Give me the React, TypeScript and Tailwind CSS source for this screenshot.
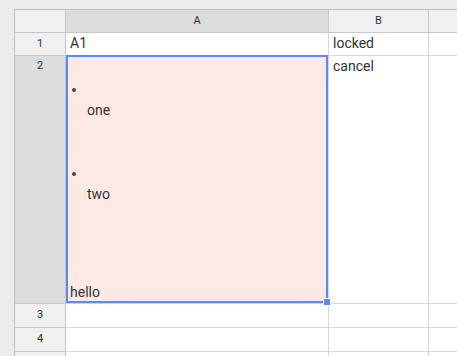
import React from "react";

// Header/row header cell styling
const hdr = "border-r border-b border-[#c6c6c6] text-center text-[11px] leading-[20px] text-[#333]";
const cell = "border-r border-b border-[#d6d6d6] bg-white px-[4px] text-[14px] leading-[21px] text-[#333]";

function Bullet() {
  return (
    <div className="h-[21px] flex items-center">
      <span className="ml-[2px] mt-[1px] block h-[4px] w-[4px] rounded-full bg-[#444]" />
    </div>
  );
}

export default function App() {
  return (
    <div
      className="h-[356px] w-[457px] overflow-hidden bg-[#ececec] pl-[14px] pt-[9px]"
      style={{ fontFamily: "Roboto, 'Liberation Sans', sans-serif" }}
    >
      <div className="grid grid-cols-[51px_263px_100px_120px] grid-rows-[23px_23px_248px_24px_24px_24px] border-l border-t border-[#c0c0c0] w-[540px]">
        {/* column headers */}
        <div className={`${hdr} bg-[#f0f0f0]`} />
        <div className={`${hdr} bg-[#dcdcdc] leading-[22px]`}>A</div>
        <div className={`${hdr} bg-[#f0f0f0] leading-[22px]`}>B</div>
        <div className={`${hdr} bg-[#f0f0f0]`} />

        {/* row 1 */}
        <div className={`${hdr} bg-[#f0f0f0] leading-[22px]`}>1</div>
        <div className={cell}>A1</div>
        <div className={cell}>locked</div>
        <div className={cell} />

        {/* row 2 */}
        <div className={`${hdr} bg-[#dcdcdc] leading-[18px]`}>2</div>
        <div className="relative border-r border-b border-[#d6d6d6] bg-[#fdeae6] px-[4px] text-[14px] leading-[21px] text-[#333] flex flex-col">
          <div className="mt-[23px]">
            <Bullet />
            <div className="pl-[17px]">one</div>
          </div>
          <div className="mt-[42px]">
            <Bullet />
            <div className="pl-[17px]">two</div>
          </div>
          <div className="mt-auto">hello</div>
          {/* selection border + fill handle */}
          <div className="absolute -top-px left-0 right-0 bottom-0 border-2 border-[#5a88f7]">
            <div className="absolute -right-[5px] -bottom-[5px] h-[8px] w-[8px] border border-white bg-[#5a88f7]" />
          </div>
        </div>
        <div className={cell}>cancel</div>
        <div className={cell} />

        {/* rows 3-4, row 5 only peeks in at the bottom */}
        {[3, 4, 0].map((n) => (
          <React.Fragment key={n}>
            <div className={`${hdr} bg-[#f0f0f0] leading-[21px]`}>{n > 0 ? n : null}</div>
            <div className={cell} />
            <div className={cell} />
            <div className={cell} />
          </React.Fragment>
        ))}
      </div>
    </div>
  );
}
